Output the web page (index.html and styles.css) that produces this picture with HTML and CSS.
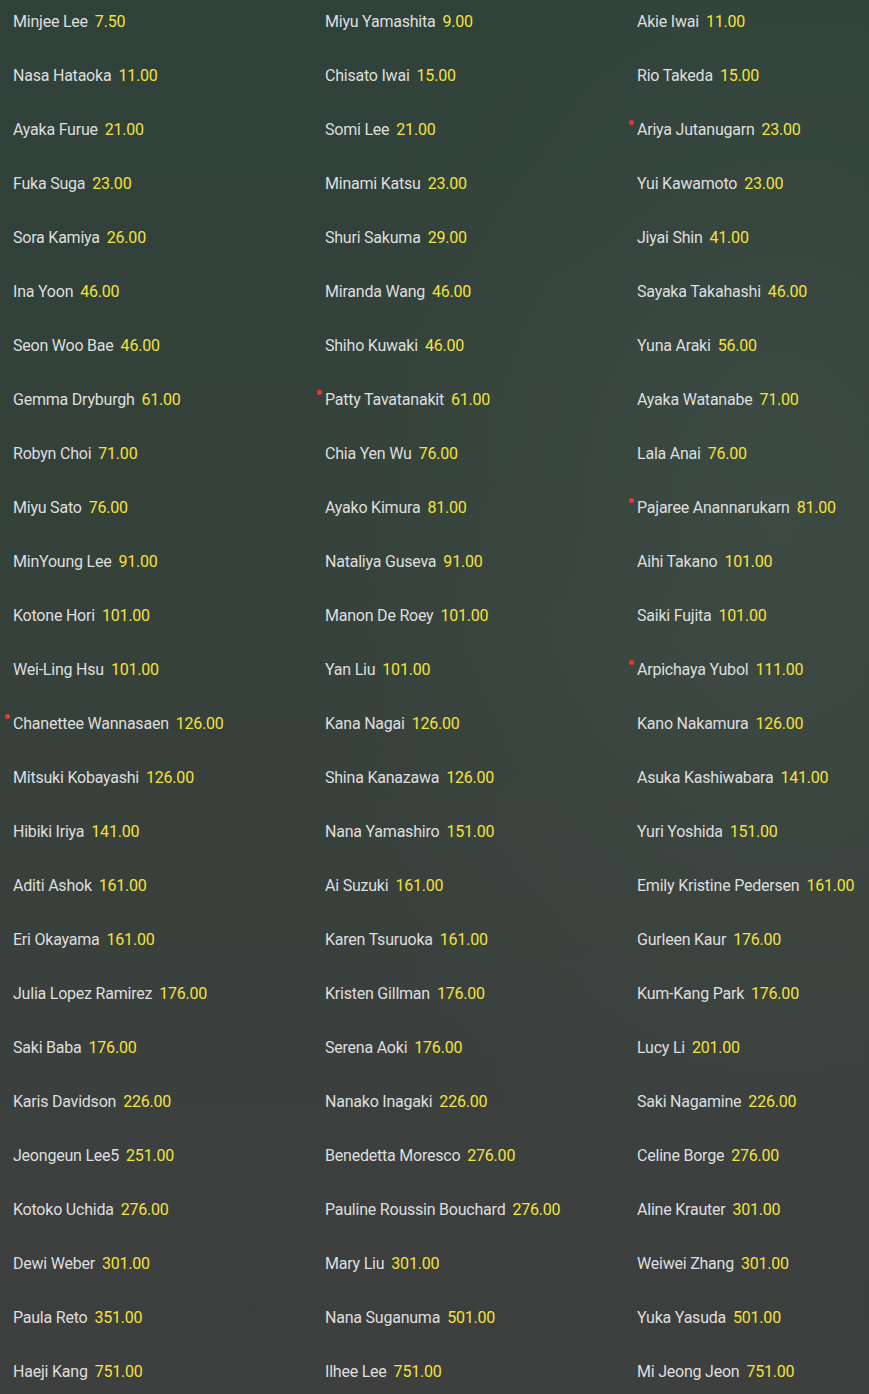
FILE: index.html
```html
<!DOCTYPE html>
<html>
<head>
<meta charset="utf-8">
<link rel="stylesheet" href="styles.css">
</head>
<body>
<div class="grid">
<div class="item"><span class="name">Minjee Lee</span><span class="price">7.50</span></div>
<div class="item"><span class="name">Miyu Yamashita</span><span class="price">9.00</span></div>
<div class="item"><span class="name">Akie Iwai</span><span class="price">11.00</span></div>
<div class="item"><span class="name">Nasa Hataoka</span><span class="price">11.00</span></div>
<div class="item"><span class="name">Chisato Iwai</span><span class="price">15.00</span></div>
<div class="item"><span class="name">Rio Takeda</span><span class="price">15.00</span></div>
<div class="item"><span class="name">Ayaka Furue</span><span class="price">21.00</span></div>
<div class="item"><span class="name">Somi Lee</span><span class="price">21.00</span></div>
<div class="item"><span class="name dot">Ariya Jutanugarn</span><span class="price">23.00</span></div>
<div class="item"><span class="name">Fuka Suga</span><span class="price">23.00</span></div>
<div class="item"><span class="name">Minami Katsu</span><span class="price">23.00</span></div>
<div class="item"><span class="name">Yui Kawamoto</span><span class="price">23.00</span></div>
<div class="item"><span class="name">Sora Kamiya</span><span class="price">26.00</span></div>
<div class="item"><span class="name">Shuri Sakuma</span><span class="price">29.00</span></div>
<div class="item"><span class="name">Jiyai Shin</span><span class="price">41.00</span></div>
<div class="item"><span class="name">Ina Yoon</span><span class="price">46.00</span></div>
<div class="item"><span class="name">Miranda Wang</span><span class="price">46.00</span></div>
<div class="item"><span class="name">Sayaka Takahashi</span><span class="price">46.00</span></div>
<div class="item"><span class="name">Seon Woo Bae</span><span class="price">46.00</span></div>
<div class="item"><span class="name">Shiho Kuwaki</span><span class="price">46.00</span></div>
<div class="item"><span class="name">Yuna Araki</span><span class="price">56.00</span></div>
<div class="item"><span class="name">Gemma Dryburgh</span><span class="price">61.00</span></div>
<div class="item"><span class="name dot">Patty Tavatanakit</span><span class="price">61.00</span></div>
<div class="item"><span class="name">Ayaka Watanabe</span><span class="price">71.00</span></div>
<div class="item"><span class="name">Robyn Choi</span><span class="price">71.00</span></div>
<div class="item"><span class="name">Chia Yen Wu</span><span class="price">76.00</span></div>
<div class="item"><span class="name">Lala Anai</span><span class="price">76.00</span></div>
<div class="item"><span class="name">Miyu Sato</span><span class="price">76.00</span></div>
<div class="item"><span class="name">Ayako Kimura</span><span class="price">81.00</span></div>
<div class="item"><span class="name dot">Pajaree Anannarukarn</span><span class="price">81.00</span></div>
<div class="item"><span class="name">MinYoung Lee</span><span class="price">91.00</span></div>
<div class="item"><span class="name">Nataliya Guseva</span><span class="price">91.00</span></div>
<div class="item"><span class="name">Aihi Takano</span><span class="price">101.00</span></div>
<div class="item"><span class="name">Kotone Hori</span><span class="price">101.00</span></div>
<div class="item"><span class="name">Manon De Roey</span><span class="price">101.00</span></div>
<div class="item"><span class="name">Saiki Fujita</span><span class="price">101.00</span></div>
<div class="item"><span class="name">Wei-Ling Hsu</span><span class="price">101.00</span></div>
<div class="item"><span class="name">Yan Liu</span><span class="price">101.00</span></div>
<div class="item"><span class="name dot">Arpichaya Yubol</span><span class="price">111.00</span></div>
<div class="item"><span class="name dot">Chanettee Wannasaen</span><span class="price">126.00</span></div>
<div class="item"><span class="name">Kana Nagai</span><span class="price">126.00</span></div>
<div class="item"><span class="name">Kano Nakamura</span><span class="price">126.00</span></div>
<div class="item"><span class="name">Mitsuki Kobayashi</span><span class="price">126.00</span></div>
<div class="item"><span class="name">Shina Kanazawa</span><span class="price">126.00</span></div>
<div class="item"><span class="name">Asuka Kashiwabara</span><span class="price">141.00</span></div>
<div class="item"><span class="name">Hibiki Iriya</span><span class="price">141.00</span></div>
<div class="item"><span class="name">Nana Yamashiro</span><span class="price">151.00</span></div>
<div class="item"><span class="name">Yuri Yoshida</span><span class="price">151.00</span></div>
<div class="item"><span class="name">Aditi Ashok</span><span class="price">161.00</span></div>
<div class="item"><span class="name">Ai Suzuki</span><span class="price">161.00</span></div>
<div class="item"><span class="name">Emily Kristine Pedersen</span><span class="price">161.00</span></div>
<div class="item"><span class="name">Eri Okayama</span><span class="price">161.00</span></div>
<div class="item"><span class="name">Karen Tsuruoka</span><span class="price">161.00</span></div>
<div class="item"><span class="name">Gurleen Kaur</span><span class="price">176.00</span></div>
<div class="item"><span class="name">Julia Lopez Ramirez</span><span class="price">176.00</span></div>
<div class="item"><span class="name">Kristen Gillman</span><span class="price">176.00</span></div>
<div class="item"><span class="name">Kum-Kang Park</span><span class="price">176.00</span></div>
<div class="item"><span class="name">Saki Baba</span><span class="price">176.00</span></div>
<div class="item"><span class="name">Serena Aoki</span><span class="price">176.00</span></div>
<div class="item"><span class="name">Lucy Li</span><span class="price">201.00</span></div>
<div class="item"><span class="name">Karis Davidson</span><span class="price">226.00</span></div>
<div class="item"><span class="name">Nanako Inagaki</span><span class="price">226.00</span></div>
<div class="item"><span class="name">Saki Nagamine</span><span class="price">226.00</span></div>
<div class="item"><span class="name">Jeongeun Lee5</span><span class="price">251.00</span></div>
<div class="item"><span class="name">Benedetta Moresco</span><span class="price">276.00</span></div>
<div class="item"><span class="name">Celine Borge</span><span class="price">276.00</span></div>
<div class="item"><span class="name">Kotoko Uchida</span><span class="price">276.00</span></div>
<div class="item"><span class="name">Pauline Roussin Bouchard</span><span class="price">276.00</span></div>
<div class="item"><span class="name">Aline Krauter</span><span class="price">301.00</span></div>
<div class="item"><span class="name">Dewi Weber</span><span class="price">301.00</span></div>
<div class="item"><span class="name">Mary Liu</span><span class="price">301.00</span></div>
<div class="item"><span class="name">Weiwei Zhang</span><span class="price">301.00</span></div>
<div class="item"><span class="name">Paula Reto</span><span class="price">351.00</span></div>
<div class="item"><span class="name">Nana Suganuma</span><span class="price">501.00</span></div>
<div class="item"><span class="name">Yuka Yasuda</span><span class="price">501.00</span></div>
<div class="item"><span class="name">Haeji Kang</span><span class="price">751.00</span></div>
<div class="item"><span class="name">Ilhee Lee</span><span class="price">751.00</span></div>
<div class="item"><span class="name">Mi Jeong Jeon</span><span class="price">751.00</span></div>
</div>
</body>
</html>
```
FILE: styles.css
```css
html, body {
  margin: 0;
  padding: 0;
}
body {
  width: 869px;
  height: 1394px;
  overflow: hidden;
  font-family: Roboto, "Liberation Sans", sans-serif;
  font-size: 16px;
  letter-spacing: -0.22px;
  background:
    radial-gradient(ellipse 500px 700px at 780px 520px, rgba(70, 85, 78, 0.45), rgba(70, 85, 78, 0) 100%),
    linear-gradient(180deg, #2f4239 0%, #344139 35%, #3a403d 70%, #3e3f3f 100%);
}
.grid {
  display: grid;
  grid-template-columns: 312px 312px minmax(0, 1fr);
  row-gap: 32px;
  padding: 11px 0 0 13px;
}
.item {
  display: flex;
  align-items: center;
  gap: 7px;
  height: 22px;
  line-height: 22px;
  white-space: nowrap;
}
.name {
  color: #dedede;
  position: relative;
}
.price {
  color: #f3e23a;
}
.dot::before {
  content: "";
  position: absolute;
  left: -8px;
  top: 1px;
  width: 5px;
  height: 5px;
  border-radius: 50%;
  background: #e53935;
}
```
